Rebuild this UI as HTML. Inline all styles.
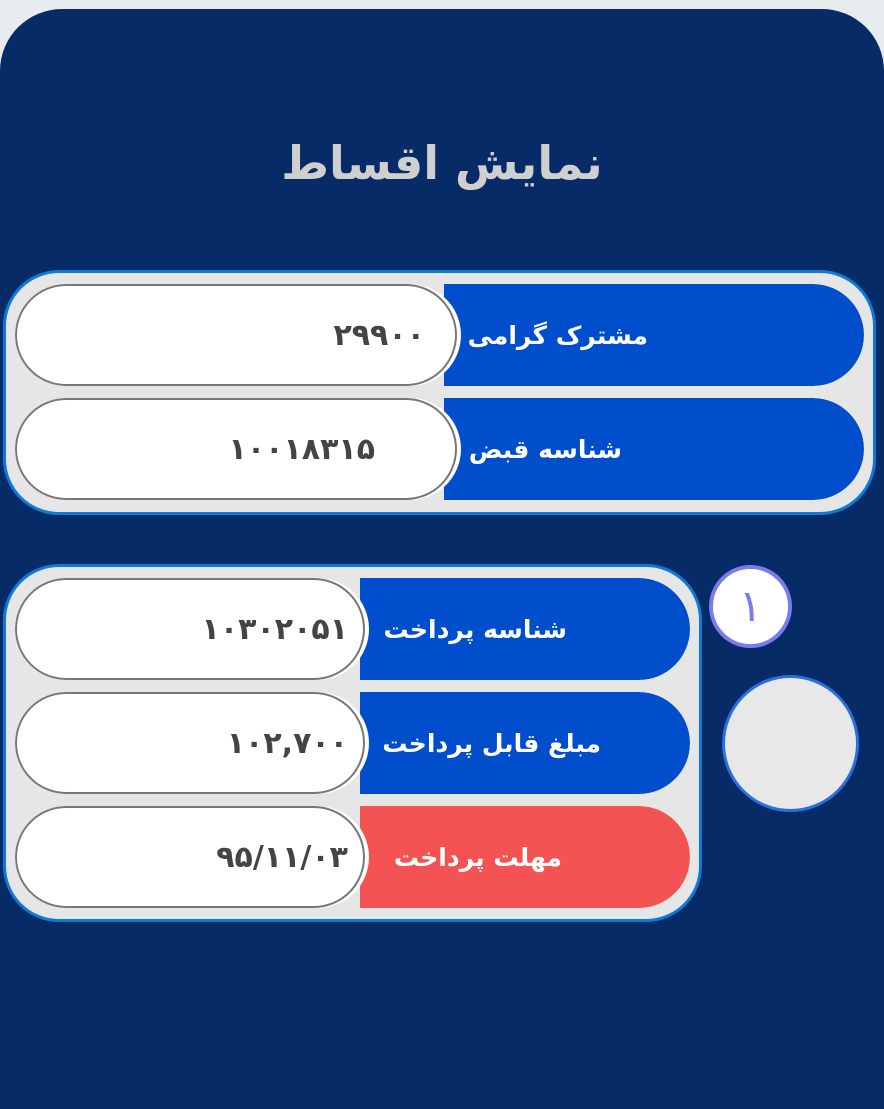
<!DOCTYPE html>
<html><head><meta charset="utf-8"><style>
*{margin:0;padding:0;box-sizing:border-box}
body{width:884px;height:1082px;background:#e9ecef;overflow:hidden;font-family:"DejaVu Sans","Noto Sans CJK SC",sans-serif;position:relative}
.panel{position:absolute;left:0;top:9px;width:884px;height:1100px;background:#062b66;border-radius:62px 62px 0 0}
h1{position:absolute;left:0;width:884px;top:136px;text-align:center;color:#cfcfcf;font-size:46px;font-weight:bold;direction:rtl}
.card{position:absolute;background:#e6e6e6;border:3px solid #0d7ad6;border-radius:56px}
.row{position:absolute;height:102px;border-radius:51px;overflow:hidden}
.lab{position:absolute;right:0;top:0;bottom:0;background:#004ecb;border-radius:0 51px 51px 0;color:#fff;font-size:25px;font-weight:bold;direction:rtl;display:flex;align-items:center;justify-content:flex-start;white-space:nowrap}
.red{background:#f45353}
.val{position:absolute;left:0;top:0;bottom:0;background:#fff;border:2px solid #777;border-radius:51px;color:#444;font-size:30px;font-weight:bold;display:flex;align-items:center;justify-content:flex-end;box-shadow:4px 0 0 #fff}
</style></head><body>
<div class="panel"></div>
<h1>نمایش اقساط</h1>
<div class="card" style="left:3px;top:270px;width:873px;height:245px"></div>
<div class="row" style="left:15px;top:284px;width:849px"><div class="lab" style="width:420px;padding-right:216px">مشترک گرامی</div><div class="val" style="width:442px;padding-right:30px">۲۹۹۰۰</div></div>
<div class="row" style="left:15px;top:398px;width:849px"><div class="lab" style="width:420px;padding-right:242px">شناسه قبض</div><div class="val" style="width:442px;padding-right:80px">۱۰۰۱۸۳۱۵</div></div>
<div class="card" style="left:3px;top:564px;width:699px;height:358px"></div>
<div class="row" style="left:15px;top:578px;width:675px"><div class="lab" style="width:330px;padding-right:123px">شناسه پرداخت</div><div class="val" style="width:350px;padding-right:15px">۱۰۳۰۲۰۵۱</div></div>
<div class="row" style="left:15px;top:692px;width:675px"><div class="lab" style="width:330px;padding-right:89px">مبلغ قابل پرداخت</div><div class="val" style="width:350px;padding-right:15px">۱۰۲,۷۰۰</div></div>
<div class="row" style="left:15px;top:806px;width:675px"><div class="lab red" style="width:330px;padding-right:128px">مهلت پرداخت</div><div class="val" style="width:350px;padding-right:15px">۹۵/۱۱/۰۳</div></div>
<div style="position:absolute;left:709px;top:565px;width:83px;height:83px;border-radius:50%;background:#fff;border:4px solid #7b7bf0;color:#7b7bf0;font-size:44px;display:flex;align-items:center;justify-content:center">۱</div>
<div style="position:absolute;left:722px;top:675px;width:137px;height:137px;border-radius:50%;background:#e8e8e8;border:3px solid #2a6fe0"></div>
</body></html>
